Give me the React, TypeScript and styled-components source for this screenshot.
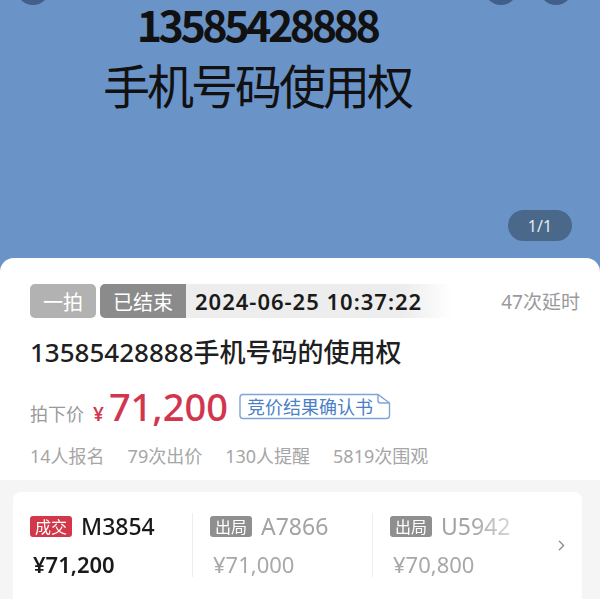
import styled, { createGlobalStyle } from 'styled-components'
import { ChevronRight } from 'lucide-react'

const GlobalStyle = createGlobalStyle`
  body {
    margin: 0;
    background: #f5f5f5;
    font-family: 'Noto Sans', 'Noto Sans CJK SC', sans-serif;
  }
  * {
    box-sizing: border-box;
  }
`

interface Record {
  status: string
  code: string
  price: string
  won?: boolean
}

const records: Record[] = [
  { status: '成交', code: 'M3854', price: '¥71,200', won: true },
  { status: '出局', code: 'A7866', price: '¥71,000' },
  { status: '出局', code: 'U5942', price: '¥70,800' },
]

const stats = ['14人报名', '79次出价', '130人提醒', '5819次围观']

export default function App() {
  return (
    <Page>
      <GlobalStyle />
      <Banner>
        <NavButton $left={16} />
        <NavButton $left={484} />
        <NavButton $left={539} />
        <BannerText>
          <BannerNumber>13585428888</BannerNumber>
          <BannerTitle>手机号码使用权</BannerTitle>
        </BannerText>
        <Counter>1/1</Counter>
      </Banner>

      <InfoCard>
        <TagRow>
          <ModeTag>一拍</ModeTag>
          <StateTag>已结束</StateTag>
          <EndTime>2024-06-25 10:37:22</EndTime>
          <Delay>47次延时</Delay>
        </TagRow>

        <Title>13585428888手机号码的使用权</Title>

        <PriceRow>
          <PriceGroup>
            <PriceLabel>拍下价</PriceLabel>
            <Yen>¥</Yen>
            <Amount>71,200</Amount>
          </PriceGroup>
          <DocBadge>
            <svg width="152" height="27" viewBox="0 0 152 27">
              <path
                d="M4 1.5 H139 L150.5 10 V22.5 Q150.5 25.5 147.5 25.5 H4 Q1 25.5 1 22.5 V4.5 Q1 1.5 4 1.5 Z"
                fill="none"
                stroke="#7ea4d8"
                strokeWidth="1.4"
              />
              <path
                d="M139 1.5 V7.5 Q139 10 141.5 10 H150.5"
                fill="none"
                stroke="#7ea4d8"
                strokeWidth="1.4"
              />
            </svg>
            竞价结果确认书
          </DocBadge>
        </PriceRow>

        <StatsRow>
          {stats.map((s) => (
            <Stat key={s}>{s}</Stat>
          ))}
        </StatsRow>
      </InfoCard>

      <RecordSection>
        <RecordCard>
          <Scroller>
            {records.map((r) => (
              <RecordItem key={r.code}>
                <RecordHead>
                  <StatusTag $won={r.won}>{r.status}</StatusTag>
                  <RecordCode $won={r.won}>{r.code}</RecordCode>
                </RecordHead>
                <RecordPrice $won={r.won}>{r.price}</RecordPrice>
              </RecordItem>
            ))}
          </Scroller>
          <More>
            <ChevronRight size={17} strokeWidth={1.8} color="#8a8a8a" />
          </More>
        </RecordCard>
      </RecordSection>
    </Page>
  )
}

const Page = styled.div`
  width: 600px;
  height: 599px;
  overflow: hidden;
  background: #f5f5f5;
`

const Banner = styled.div`
  position: relative;
  height: 272px;
  background: #6a93c7;
  overflow: hidden;
`

const NavButton = styled.div<{ $left: number }>`
  position: absolute;
  top: -29px;
  left: ${(p) => p.$left}px;
  width: 34px;
  height: 34px;
  border-radius: 50%;
  background: rgba(38, 60, 96, 0.6);
`

const BannerText = styled.div`
  width: 514px;
  display: flex;
  flex-direction: column;
  align-items: center;
  color: #111;
  font-family: 'Noto Sans CJK SC', sans-serif;
`

const BannerNumber = styled.div`
  font-size: 43px;
  font-weight: 700;
  line-height: 46px;
  letter-spacing: -3.5px;
`

const BannerTitle = styled.div`
  margin-top: 12px;
  font-size: 47px;
  line-height: 52px;
  letter-spacing: -3px;
  font-weight: 400;
`

const Counter = styled.div`
  position: absolute;
  top: 210px;
  right: 28px;
  width: 64px;
  height: 31px;
  border-radius: 16px;
  background: #4a6889;
  color: #e3e9f1;
  font-size: 16px;
  display: flex;
  align-items: center;
  justify-content: center;
`

const InfoCard = styled.div`
  position: relative;
  margin-top: -14px;
  background: #fff;
  border-radius: 14px 14px 0 0;
  padding: 26px 20px 12px 30px;
`

const TagRow = styled.div`
  display: flex;
  align-items: center;
  height: 34px;
`

const ModeTag = styled.span`
  height: 34px;
  padding: 0 13px;
  display: flex;
  align-items: center;
  border-radius: 5px;
  background: #b2b2b2;
  color: #fff;
  font-size: 20px;
  margin-right: 4px;
`

const StateTag = styled(ModeTag)`
  background: #8b8b8b;
  border-radius: 5px 0 0 5px;
  margin-right: 0;
`

const EndTime = styled.span`
  height: 34px;
  display: flex;
  align-items: center;
  padding: 0 30px 0 9px;
  background: linear-gradient(to right, #ededed 82%, rgba(237, 237, 237, 0));
  color: #1a1a1a;
  font-size: 22px;
  font-weight: 600;
  letter-spacing: 1px;
`

const Delay = styled.span`
  margin-left: auto;
  color: #9a9a9a;
  font-size: 19px;
`

const Title = styled.div`
  margin-top: 17px;
  font-size: 26px;
  line-height: 34px;
  font-weight: 500;
  color: #1f1f1f;
`

const PriceRow = styled.div`
  margin-top: 17px;
  height: 40px;
  display: flex;
  align-items: center;
`

const PriceGroup = styled.div`
  display: flex;
  align-items: baseline;
`

const PriceLabel = styled.span`
  font-size: 18px;
  color: #9a9a9a;
`

const Yen = styled.span`
  margin: 0 5px 0 9px;
  font-size: 19px;
  font-weight: 600;
  color: #d2364f;
`

const Amount = styled.span`
  font-size: 38px;
  line-height: 40px;
  font-weight: 500;
  color: #d2364f;
`

const DocBadge = styled.span`
  position: relative;
  margin-left: 11px;
  width: 152px;
  height: 27px;
  padding-left: 8px;
  display: flex;
  align-items: center;
  font-size: 18px;
  color: #4b7fc6;

  & > svg {
    position: absolute;
    left: 0;
    top: 0;
  }
`

const StatsRow = styled.div`
  margin-top: 18px;
  display: flex;
  gap: 23px;
`

const Stat = styled.span`
  font-size: 18px;
  line-height: 24px;
  color: #a6a6a6;
`

const RecordSection = styled.div`
  padding: 12px 18px 0 13px;
`

const RecordCard = styled.div`
  height: 130px;
  display: flex;
  align-items: flex-start;
  padding-top: 21px;
  background: #fff;
  border-radius: 8px 8px 0 0;
`

const Scroller = styled.div`
  flex: 1;
  display: flex;
  overflow: hidden;
  mask-image: linear-gradient(to right, #000 calc(100% - 70px), transparent);
`

const RecordItem = styled.div`
  flex: 0 0 180px;
  height: 64px;
  padding-left: 17px;
  border-right: 1px solid #eeeeee;
  display: flex;
  flex-direction: column;
  justify-content: space-between;
`

const RecordHead = styled.div`
  display: flex;
  align-items: center;
  height: 26px;
`

const StatusTag = styled.span<{ $won?: boolean }>`
  height: 21px;
  padding: 0 5px;
  display: flex;
  align-items: center;
  border-radius: 3px;
  background: ${(p) => (p.$won ? '#d3384a' : '#8f8f8f')};
  color: #fff;
  font-size: 16px;
`

const RecordCode = styled.span<{ $won?: boolean }>`
  margin-left: 9px;
  font-size: 23px;
  line-height: 26px;
  font-weight: ${(p) => (p.$won ? 500 : 400)};
  color: ${(p) => (p.$won ? '#1a1a1a' : '#a3a3a3')};
`

const RecordPrice = styled.span<{ $won?: boolean }>`
  padding-left: 3px;
  font-size: 22px;
  line-height: 26px;
  font-weight: ${(p) => (p.$won ? 600 : 400)};
  color: ${(p) => (p.$won ? '#1a1a1a' : '#a8a8a8')};
`

const More = styled.div`
  width: 42px;
  height: 64px;
  display: flex;
  align-items: center;
  justify-content: center;
`
